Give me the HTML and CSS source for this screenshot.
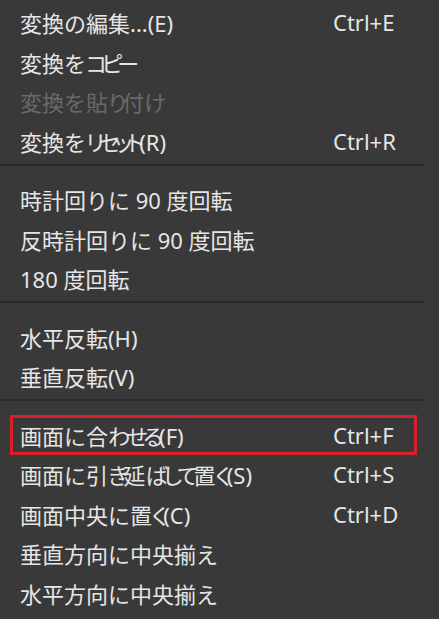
FILE: index.html
```html
<!DOCTYPE html>
<html lang="ja">

<head>
    <meta charset="UTF-8">
    <meta name="viewport" content="width=device-width, initial-scale=1.0">
    <title>変換メニュー</title>
    <link rel="stylesheet" href="styles.css">
</head>

<body>
    <div class="menu">
        <div class="menu-item"><span class="label">変換の編集...(E)</span><span class="shortcut">Ctrl+E</span></div>
        <div class="menu-item"><span class="label">変換を<span class="kata">コピー</span></span></div>
        <div class="menu-item disabled"><span class="label">変換を貼<span class="kana">り</span>付<span class="kana">け</span></span></div>
        <div class="menu-item"><span class="label">変換を<span class="kata">リセット</span>(R)</span><span class="shortcut">Ctrl+R</span></div>

        <div class="separator"></div>

        <div class="menu-item"><span class="label">時計回りに 90 度回転</span></div>
        <div class="menu-item"><span class="label">反時計回りに 90 度回転</span></div>
        <div class="menu-item"><span class="label">180 度回転</span></div>

        <div class="separator"></div>

        <div class="menu-item"><span class="label">水平反転(H)</span></div>
        <div class="menu-item"><span class="label">垂直反転(V)</span></div>

        <div class="separator"></div>

        <div class="menu-item marked"><span class="label">画面に合<span class="kana">わせる</span>(F)</span><span class="shortcut">Ctrl+F</span></div>
        <div class="menu-item"><span class="label">画面に引<span class="kana">き</span>延<span class="kana">ばして</span>置<span class="kana">く</span>(S)</span><span class="shortcut">Ctrl+S</span></div>
        <div class="menu-item"><span class="label">画面中央に置<span class="kana">く</span>(C)</span><span class="shortcut">Ctrl+D</span></div>
        <div class="menu-item"><span class="label">垂直方向に中央揃え</span></div>
        <div class="menu-item"><span class="label">水平方向に中央揃え</span></div>
    </div>
</body>

</html>
```

FILE: styles.css
```css
* {
    margin: 0;
    padding: 0;
    box-sizing: border-box;
}

body {
    font-family: 'Noto Sans', 'Noto Sans CJK JP', sans-serif;
    background-color: #393939;
    color: #e6e6e6;
    height: 100vh;
    overflow: hidden;
}

/* Menu */
.menu {
    padding: 2.5px 14px 0 0;
}

.menu-item {
    position: relative;
    display: flex;
    align-items: center;
    height: 39.5px;
    padding-left: 20px;
    font-size: 22px;
    white-space: nowrap;
}

.menu-item .label {
    width: 313px;
}

.menu-item.disabled {
    color: #696969;
}

/* narrow kana, like the UI font of the original */
.kata,
.kana {
    font-family: 'Noto Sans CJK JP', sans-serif;
    font-feature-settings: "palt" 1;
}

.kata {
    letter-spacing: -5px;
}

.kana {
    letter-spacing: -4px;
}

/* red annotation box */
.menu-item.marked::after {
    content: '';
    position: absolute;
    top: 0;
    left: 10px;
    right: 8px;
    bottom: 0;
    border: 3px solid #d8202c;
}

.separator {
    height: 2px;
    margin: 3px 0 14px;
    background-color: #2a2a2a;
}
```
